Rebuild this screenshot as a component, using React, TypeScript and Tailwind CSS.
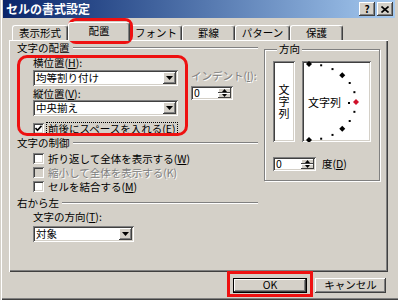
import React from 'react';

const SUNKEN =
  'shadow-[inset_1px_1px_0_#808080,inset_-1px_-1px_0_#ffffff,inset_2px_2px_0_#404040,inset_-2px_-2px_0_#d4d0c8]';
const RAISED =
  'shadow-[inset_-1px_-1px_0_#404040,inset_1px_1px_0_#ffffff,inset_-2px_-2px_0_#808080,inset_2px_2px_0_#d4d0c8]';
const RAISED_THIN = 'shadow-[inset_-1px_-1px_0_#404040,inset_1px_1px_0_#ffffff]';
const DISABLED = 'text-[#808080] [text-shadow:1px_1px_0_#ffffff]';

function DownArrow() {
  return (
    <svg width="7" height="4" viewBox="0 0 7 4">
      <path d="M0 0h7L3.5 4z" fill="#000" />
    </svg>
  );
}

function Combo({ value, w }: { value: string; w: string }) {
  return (
    <div className={`${w} flex h-[16px] items-stretch bg-white p-[2px] ${SUNKEN}`}>
      <span className="flex flex-1 items-center pl-[1px] leading-none">{value}</span>
      <div className={`flex w-[13px] items-center justify-center bg-[#d4d0c8] ${RAISED}`}>
        <DownArrow />
      </div>
    </div>
  );
}

function Spin({ w }: { w: string }) {
  return (
    <div className={`${w} flex h-[14px] items-stretch bg-white p-[2px] ${SUNKEN}`}>
      <span className="flex flex-1 items-center pl-[1px] leading-none">0</span>
      <div className="flex w-[13px] flex-col">
        <div className={`flex flex-1 items-center justify-center bg-[#d4d0c8] ${RAISED_THIN}`}>
          <svg width="5" height="3" viewBox="0 0 5 3">
            <path d="M2.5 0L5 3H0z" fill="#000" />
          </svg>
        </div>
        <div className={`flex flex-1 items-center justify-center bg-[#d4d0c8] ${RAISED_THIN}`}>
          <svg width="5" height="3" viewBox="0 0 5 3">
            <path d="M0 0h5L2.5 3z" fill="#000" />
          </svg>
        </div>
      </div>
    </div>
  );
}

function Check({ checked, disabled }: { checked?: boolean; disabled?: boolean }) {
  return (
    <div
      className={`flex h-[11px] w-[11px] shrink-0 items-center justify-center ${
        disabled ? 'bg-[#d4d0c8]' : 'bg-white'
      } ${SUNKEN}`}
    >
      {checked && (
        <svg width="7" height="7" viewBox="0 0 7 7">
          <path d="M0.5 3l2 2.2L6.5 0.8" stroke="#000" strokeWidth="1.6" fill="none" />
        </svg>
      )}
    </div>
  );
}

function Header({ label }: { label: string }) {
  return (
    <div className="flex h-[12px] items-center">
      <span className="leading-none">{label}</span>
      <div className="ml-[3px] h-[2px] flex-1 border-t border-b border-t-[#808080] border-b-white" />
    </div>
  );
}

function CheckRow({
  children,
  checked,
  disabled,
  focus,
}: {
  children: React.ReactNode;
  checked?: boolean;
  disabled?: boolean;
  focus?: boolean;
}) {
  return (
    <div className="flex h-[14px] items-center pl-[16px]">
      <Check checked={checked} disabled={disabled} />
      <span
        className={`ml-[3px] px-[1px] leading-[11px] ${disabled ? DISABLED : ''} ${
          focus ? 'outline-1 outline-dotted outline-black' : ''
        }`}
      >
        {children}
      </span>
    </div>
  );
}

function Dial() {
  const cx = 7;
  const cy = 41;
  const rx = 47;
  const ry = 38;
  const pts: { a: number; x: number; y: number }[] = [];
  for (let a = 90; a >= -90; a -= 15) {
    const r = (a * Math.PI) / 180;
    pts.push({ a, x: cx + rx * Math.cos(r), y: cy - ry * Math.sin(r) });
  }
  return (
    <svg className="absolute inset-0" width="69" height="81" viewBox="0 0 69 81">
      {pts.map(p => {
        if (p.a === 0)
          return (
            <path
              key={p.a}
              d={`M${p.x} ${p.y - 3}l3 3-3 3-3-3z`}
              fill="#d0102a"
            />
          );
        if (p.a % 45 === 0)
          return (
            <path key={p.a} d={`M${p.x} ${p.y - 3}l3 3-3 3-3-3z`} fill="#000" />
          );
        return <rect key={p.a} x={p.x - 1} y={p.y - 1} width="2" height="2" fill="#000" />;
      })}
      <rect x="46" y="41" width="2" height="2" fill="#000" />
    </svg>
  );
}

const TABS: [string, string, boolean][] = [
  ['表示形式', 'w-[56px]', false],
  ['配置', 'w-[62px]', true],
  ['フォント', 'w-[52px]', false],
  ['罫線', 'w-[53px]', false],
  ['パターン', 'w-[55px]', false],
  ['保護', 'w-[53px]', false],
];

export default function App() {
  return (
    <div className="relative h-[300px] w-[398px] overflow-hidden bg-[#d4d0c8] font-['Noto_Sans_CJK_JP',sans-serif] text-[10.5px] text-black shadow-[inset_1px_0_0_#d4d0c8,inset_2px_0_0_#ffffff,inset_0_-1px_0_#404040,inset_0_-2px_0_#808080]">
      {/* title bar */}
      <div className="mx-[3px] flex h-[18px] items-center bg-linear-to-r from-[#0a246a] to-[#a6caf0] pl-[3px] pr-[2px]">
        <span className="flex-1 text-[12px] leading-none font-bold text-white">セルの書式設定</span>
        <div className={`flex h-[14px] w-[16px] items-center justify-center bg-[#d4d0c8] ${RAISED}`}>
          <span className="text-[10px] leading-none font-bold">?</span>
        </div>
        <div className={`ml-[2px] flex h-[14px] w-[16px] items-center justify-center bg-[#d4d0c8] ${RAISED}`}>
          <svg width="8" height="7" viewBox="0 0 8 7">
            <path d="M0.5 0.5l7 6M7.5 0.5l-7 6" stroke="#000" strokeWidth="1.6" />
          </svg>
        </div>
      </div>

      {/* tabs */}
      <div className="ml-[12px] flex h-[22px] items-end">
        {TABS.map(([label, w, sel]) => (
          <div
            key={label}
            className={`${w} flex items-center justify-center rounded-t-[3px] border-t border-l border-r border-t-white border-l-white border-r-[#404040] shadow-[inset_-1px_0_0_#808080] leading-none ${
              sel ? 'relative z-10 mb-[-1px] h-[19px] bg-[#d4d0c8] pb-[2px]' : 'h-[15px] pt-[1px]'
            }`}
          >
            {label}
          </div>
        ))}
      </div>

      {/* panel */}
      <div className="ml-[9px] flex h-[232px] w-[379px] border-t border-l border-t-white border-l-white pt-[1px] pl-[7px] shadow-[inset_-1px_-1px_0_#404040,inset_-2px_-2px_0_#808080]">
        <div className="flex w-[241px] flex-col">
          <Header label="文字の配置" />
          <div className="mt-[2px] flex">
            <div className="flex w-[161px] flex-col pl-[16px]">
              <span className="h-[13px] leading-[13px]">
                横位置(<u>H</u>):
              </span>
              <div className="mt-[1px]">
                <Combo value="均等割り付け" w="w-[145px]" />
              </div>
              <span className="mt-[1px] h-[13px] leading-[13px]">
                縦位置(<u>V</u>):
              </span>
              <Combo value="中央揃え" w="w-[145px]" />
              <div className="mt-[5px] -ml-[16px]">
                <CheckRow checked focus>
                  前後にスペースを入れる(<u>E</u>)
                </CheckRow>
              </div>
            </div>
            <div className="ml-[13px] mt-[14px] flex flex-col">
              <span className={`h-[12px] leading-[12px] ${DISABLED}`}>
                インデント(<u>I</u>):
              </span>
              <div className="mt-[4px]">
                <Spin w="w-[42px]" />
              </div>
            </div>
          </div>
          <div className="mt-[2px]">
            <Header label="文字の制御" />
          </div>
          <div className="mt-[2px]">
            <CheckRow>
              折り返して全体を表示する(<u>W</u>)
            </CheckRow>
            <CheckRow disabled>縮小して全体を表示する(K)</CheckRow>
            <CheckRow>
              セルを結合する(<u>M</u>)
            </CheckRow>
          </div>
          <div className="mt-[4px]">
            <Header label="右から左" />
          </div>
          <span className="mt-[2px] h-[12px] pl-[16px] leading-[12px]">
            文字の方向(<u>T</u>):
          </span>
          <div className="mt-[3px] pl-[16px]">
            <Combo value="対象" w="w-[101px]" />
          </div>
        </div>

        {/* orientation group */}
        <fieldset className="mt-[1px] ml-[6px] h-[138px] w-[114px] border border-[#808080] px-[8px] shadow-[inset_1px_1px_0_#ffffff,1px_1px_0_#ffffff]">
          <legend className="ml-[4px] bg-[#d4d0c8] px-[2px] leading-[12px]">方向</legend>
          <div className="mt-[6px] flex gap-[7px]">
            <div className={`flex h-[81px] w-[22px] items-center justify-center bg-white text-[11px] ${SUNKEN}`}>
              <span className="leading-[12px] tracking-[1px] [writing-mode:vertical-rl]">文字列</span>
            </div>
            <div className={`relative flex h-[81px] w-[69px] items-center bg-white pt-[2px] pl-[6px] text-[11px] ${SUNKEN}`}>
              <Dial />
              <span className="relative leading-none">文字列</span>
            </div>
          </div>
          <div className="mt-[15px] flex items-center">
            <Spin w="w-[43px]" />
            <span className="ml-[6px] leading-none">
              度(<u>D</u>)
            </span>
          </div>
        </fieldset>
      </div>

      {/* buttons */}
      <div className="mt-[6px] flex justify-end gap-[8px] pr-[12px]">
        <div className="flex h-[15px] w-[74px] border border-black">
          <div className={`flex flex-1 items-center justify-center leading-none ${RAISED}`}>OK</div>
        </div>
        <div className={`flex h-[15px] w-[71px] items-center justify-center leading-none ${RAISED}`}>
          キャンセル
        </div>
      </div>

      {/* red annotation marks */}
      <div className="absolute top-[18px] left-[68px] h-[26px] w-[65px] rounded-[8px] border-[3px] border-[#ee1111]" />
      <div className="absolute top-[55px] left-[17px] h-[81px] w-[171px] rounded-[10px] border-[3px] border-[#ee1111]" />
      <div className="absolute top-[271px] left-[227px] h-[26px] w-[86px] border-[3px] border-[#ee1111]" />
    </div>
  );
}
